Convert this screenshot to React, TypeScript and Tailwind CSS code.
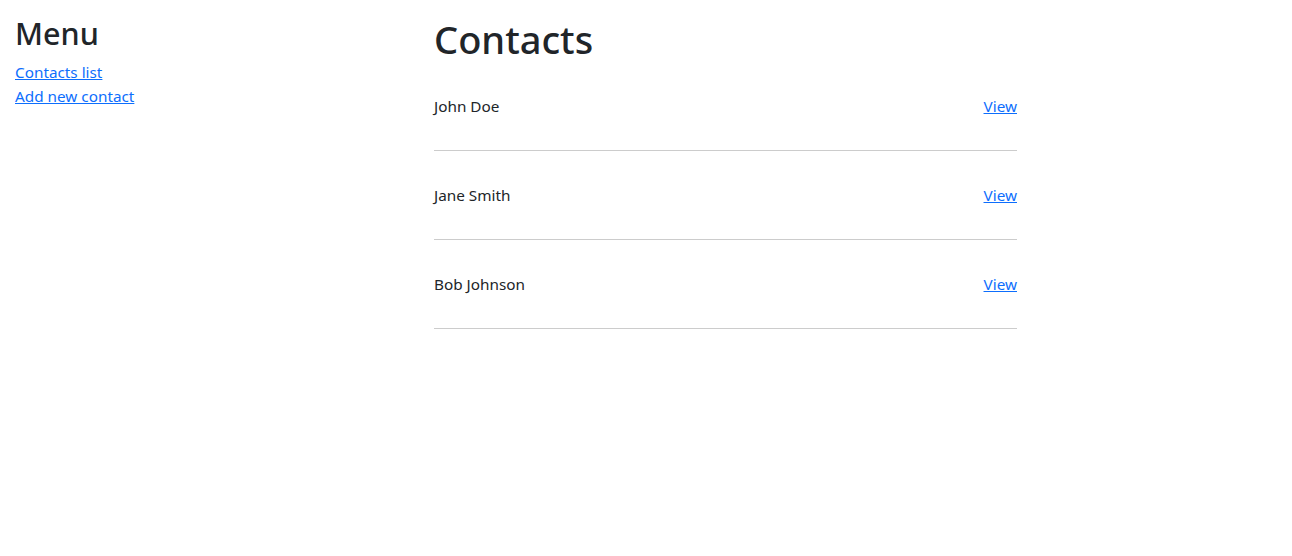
import React from 'react';

const contacts = ['John Doe', 'Jane Smith', 'Bob Johnson'];

const App: React.FC = () => {
  return (
    <div className="min-h-screen bg-white text-[#212529] font-['Noto_Sans',sans-serif] text-[15.3px] leading-6">
      <div className="flex pt-[14px]">
        <aside className="w-[419px] shrink-0 px-[15px]">
          <h2 className="text-[30.5px] leading-[37px] pt-px font-medium mb-2">Menu</h2>
          <a href="#" className="block text-[#0d6efd] underline">
            Contacts list
          </a>
          <a href="#" className="block text-[#0d6efd] underline">
            Add new contact
          </a>
        </aside>
        <main className="w-[583px] shrink-0 ml-[15px]">
          <h1 className="text-[38px] leading-[45px] pt-[3px] font-medium">Contacts</h1>
          <ul>
            {contacts.map((name) => (
              <li key={name} className="flex items-center justify-between py-8 border-b border-[#cccccc]">
                <span>{name}</span>
                <a href="#" className="text-[#0d6efd] underline">
                  View
                </a>
              </li>
            ))}
          </ul>
        </main>
      </div>
    </div>
  );
};

export default App;
